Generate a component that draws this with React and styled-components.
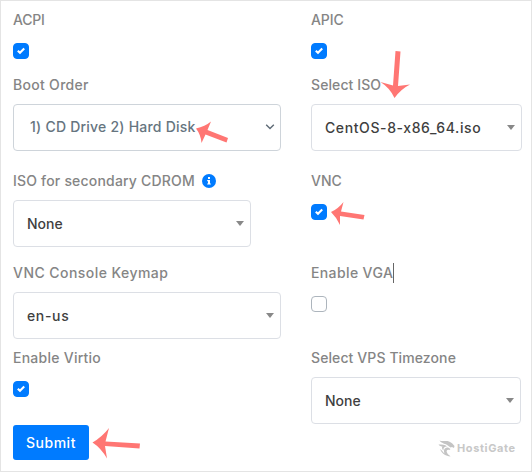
import React from "react";
import styled, { createGlobalStyle } from "styled-components";

const GlobalStyle = createGlobalStyle`
  * { box-sizing: border-box; }
  body { margin: 0; background: #fff; font-family: Inter, "Open Sans", sans-serif; }
`;

const Panel = styled.main`
  position: relative;
  width: 532px;
  height: 472px;
  border: 1px solid #e4e4e4;
  padding: 9px 0 0 12px;
  background: #fff;
  overflow: hidden;
`;

const Form = styled.form`
  display: grid;
  grid-template-columns: 268px 211px;
  grid-template-rows: 65px 96px 92px 85px 77px 35px;
  column-gap: 30px;
`;

const Field = styled.div`
  display: flex;
  flex-direction: column;
  align-items: flex-start;
`;

const Label = styled.label`
  display: flex;
  align-items: center;
  height: 20px;
  font-size: 14px;
  line-height: 20px;
  font-weight: 450;
  color: #858585;
  white-space: nowrap;
  letter-spacing: ${(p) => p.$track || 0}px;
`;

const InfoIcon = styled.svg`
  width: 14px;
  height: 14px;
  margin-left: 7px;
`;

const Caret = styled.span`
  width: 1px;
  height: 20px;
  background: #666;
`;

const Check = styled.span`
  display: flex;
  align-items: center;
  justify-content: center;
  width: 16px;
  height: 16px;
  margin-top: 13px;
  border-radius: 4px;
  border: 1px solid ${(p) => (p.$on ? "#007bff" : "#adb5bd")};
  background: ${(p) => (p.$on ? "#007bff" : "#fff")};
`;

const SelectBox = styled.div`
  display: flex;
  align-items: center;
  justify-content: space-between;
  width: ${(p) => p.$width}px;
  height: 47px;
  margin-top: 9px;
  padding: ${(p) => (p.$native ? "0 5px 2px 16px" : "0 6px 0 13px")};
  border: 1px solid ${(p) => (p.$native ? "#ced4da" : "#dcdfe5")};
  border-radius: 4px;
  font-size: 14px;
  font-weight: 500;
  color: ${(p) => (p.$native ? "#66757f" : "#3f3f3f")};
  letter-spacing: ${(p) => p.$track || 0}px;
  white-space: nowrap;
`;

const Triangle = styled.span`
  border: 4px solid transparent;
  border-top: 5px solid #888;
  border-bottom: 0;
`;

const Submit = styled.button`
  width: 76px;
  height: 35px;
  padding: 0 0 1px;
  border: 0;
  border-radius: 3px;
  background: #007bff;
  color: #fff;
  font: 500 14px Inter, sans-serif;
  letter-spacing: 0.5px;
`;

const Annotations = styled.svg`
  position: absolute;
  left: -1px;
  top: -1px;
  width: 532px;
  height: 472px;
  pointer-events: none;
  fill: #ff7673;
`;

const Watermark = styled.div`
  position: absolute;
  left: 437px;
  top: 437px;
  display: flex;
  align-items: center;
  gap: 1px;
  height: 20px;
  color: #c8c8c8;
  font-size: 11px;
  font-weight: 700;
  letter-spacing: 0.6px;
`;

function Tick({ on = true }) {
  return (
    <Check $on={on}>
      {on && (
        <svg width="8" height="8" viewBox="0 0 8 8">
          <path d="M0.8 3.7 3 5.8 7.2 1.6" fill="none" stroke="#fff" strokeWidth="2.1" />
        </svg>
      )}
    </Check>
  );
}

function Select({ children, width, track }) {
  return (
    <SelectBox $width={width} $track={track}>
      {children}
      <Triangle />
    </SelectBox>
  );
}

export default function App() {
  return (
    <>
      <GlobalStyle />
      <Panel>
        <Form>
          <Field>
            <Label $track={-0.2}>ACPI</Label>
            <Tick />
          </Field>
          <Field>
            <Label $track={-0.1}>APIC</Label>
            <Tick />
          </Field>
          <Field>
            <Label $track={0.3}>Boot Order</Label>
            <SelectBox $native $width={268} $track={0.22}>
              1) CD Drive 2) Hard Disk
              <svg width="10" height="6" viewBox="0 0 10 6">
                <path d="M1.2 0.8 5 4.6 8.8 0.8" fill="none" stroke="#5f6b76" strokeWidth="1.4" />
              </svg>
            </SelectBox>
          </Field>
          <Field>
            <Label $track={0.1}>Select ISO</Label>
            <Select width={211} track={0.6}>CentOS-8-x86_64.iso</Select>
          </Field>
          <Field>
            <Label $track={0.19}>
              ISO for secondary CDROM
              <InfoIcon viewBox="0 0 14 14">
                <circle cx="7" cy="7" r="7" fill="#007bff" />
                <path d="M6 3h2v2H6zM5.2 6H8v3.4h.8v1.2H5.2V9.4H6V7.2h-.8z" fill="#fff" />
              </InfoIcon>
            </Label>
            <Select width={238}>None</Select>
          </Field>
          <Field>
            <Label>VNC</Label>
            <Tick />
          </Field>
          <Field>
            <Label $track={0.45}>VNC Console Keymap</Label>
            <Select width={268} track={0.65}>en-us</Select>
          </Field>
          <Field>
            <Label $track={0.38}>
              Enable VGA
              <Caret />
            </Label>
            <Tick on={false} />
          </Field>
          <Field>
            <Label $track={0.25}>Enable Virtio</Label>
            <Tick />
          </Field>
          <Field>
            <Label $track={0.1}>Select VPS Timezone</Label>
            <Select width={210}>None</Select>
          </Field>
          <Submit type="button">Submit</Submit>
        </Form>
        <Watermark>
          <svg width="18" height="18" viewBox="0 0 18 18" fill="#c4c4c4">
            <path d="M1.500 1.500C5 3 8 1 11 2.500 14 3.500 15 5.500 16.500 7L16 9 14 8 12.500 8.500 10.500 7C8 4.500 4 5 1.500 1.500Z" />
            <path d="M0.500 5.500C4 5.500 7 5.500 9 7.500 6.500 7.500 5 9 5.500 11.500 4 10 3.500 8.500 4.500 7.500 3 7.500 1.500 7 0.500 5.500Z" />
            <path d="M2 10C4 11 4.500 13 6.500 14.500 5 10.500 7 8.500 10 8.500L12.500 10 11.500 11C9 10 8 12 9 13.500 9.500 15.500 11.500 16 12.500 17.500 8 17 4 15 2 10Z" />
          </svg>
          HostiGate
        </Watermark>
        <Annotations viewBox="0 0 532 472">
          <path d="M196 128.500 Q205 126.500 211 121.500 L207.500 130 L228 138 L226.500 142.500 L205.500 134.500 L201.500 143 Q201 135 196 128.500 Z" />
          <path d="M395.500 51 L400.500 51.500 L398 86 L410 84.500 Q401 89 394.500 98 Q390 88 380.500 82 L393 85.500 Z" />
          <path d="M331 212 Q338 209 343.500 202 L341 211.500 L364.500 215 L363.500 219.500 L340 216 L340 225 Q337 218 331 212 Z" />
          <path d="M92.500 442.500 Q102 437 109 428 L105.500 441.500 L140 443.500 L139.500 448.500 L105 446 L107 458.500 Q101 448 92.500 442.500 Z" />
        </Annotations>
      </Panel>
    </>
  );
}
